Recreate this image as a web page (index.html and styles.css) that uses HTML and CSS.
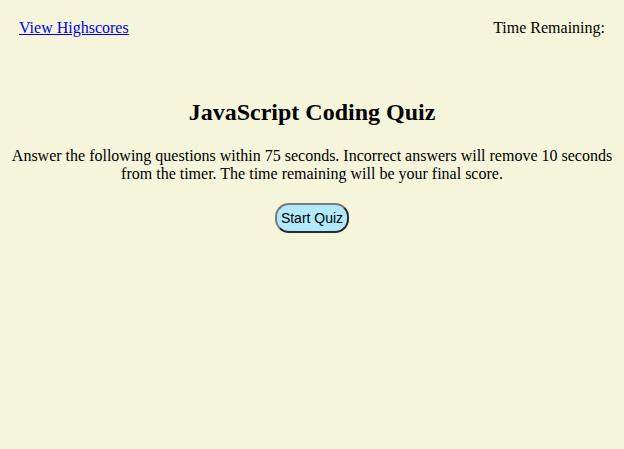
FILE: index.html
```html
<!DOCTYPE html>
<html>
<head>
<meta charset="utf-8">
<link rel="stylesheet" href="styles.css">
</head>
<body>
<header class="top-bar">
  <a href="#" class="highscores-link">View Highscores</a>
  <div class="timer">Time Remaining: <span class="time"></span></div>
</header>
<main class="intro">
  <h1 class="title">JavaScript Coding Quiz</h1>
  <p class="instructions">Answer the following questions within 75 seconds. Incorrect answers will remove 10 seconds from the timer. The time remaining will be your final score.</p>
  <button class="start-btn">Start Quiz</button>
</main>
</body>
</html>
```
FILE: styles.css
```css
html, body {
  background: #f5f5dc;
}
body {
  margin: 8px;
  font-family: "Liberation Serif", "Times New Roman", serif;
  font-size: 16px;
  color: #000;
}
.top-bar {
  display: flex;
  justify-content: space-between;
  align-items: center;
  padding: 11px 11px 10px;
}
.highscores-link {
  color: #0000ee;
}
.intro {
  display: flex;
  flex-direction: column;
  align-items: center;
  text-align: center;
  margin-top: 52px;
}
.title {
  font-size: 24px;
  margin: 0;
}
.instructions {
  margin: 21px 0 20px;
  line-height: 18px;
}
.start-btn {
  font-family: "Liberation Sans", Arial, sans-serif;
  font-size: 14px;
  background: #b0e8fc;
  border: 2px solid;
  border-color: #7a7a7a #2a2a2a #2a2a2a #7a7a7a;
  border-radius: 14px;
  padding: 5px 4px;
  color: #000;
}
```
